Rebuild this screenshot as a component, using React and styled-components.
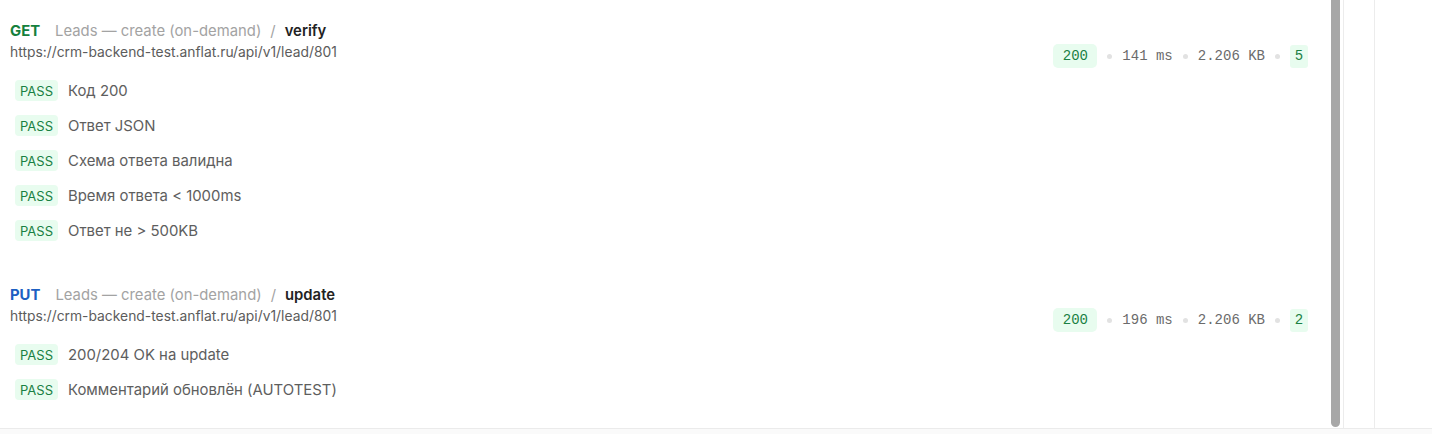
import styled, { createGlobalStyle } from 'styled-components';

const runs = [
  {
    method: 'GET',
    collection: 'Leads — create (on-demand)',
    name: 'verify',
    url: 'https://crm-backend-test.anflat.ru/api/v1/lead/801',
    status: 200,
    time: '141 ms',
    size: '2.206 KB',
    checks: [
      'Код 200',
      'Ответ JSON',
      'Схема ответа валидна',
      'Время ответа < 1000ms',
      'Ответ не > 500KB',
    ],
  },
  {
    method: 'PUT',
    collection: 'Leads — create (on-demand)',
    name: 'update',
    url: 'https://crm-backend-test.anflat.ru/api/v1/lead/801',
    status: 200,
    time: '196 ms',
    size: '2.206 KB',
    checks: ['200/204 OK на update', 'Комментарий обновлён (AUTOTEST)'],
  },
];

const RunEntry = ({ run }) => (
  <Entry>
    <Top>
      <Titles>
        <Heading>
          <Method method={run.method}>{run.method}</Method>
          <Collection>{run.collection}</Collection>
          <Slash>/</Slash>
          <Name>{run.name}</Name>
        </Heading>
        <Url>{run.url}</Url>
      </Titles>
      <Meta>
        <StatusBadge>{run.status}</StatusBadge>
        <Dot />
        <MetaText>{run.time}</MetaText>
        <Dot />
        <MetaText>{run.size}</MetaText>
        <Dot />
        <CountBadge>{run.checks.length}</CountBadge>
      </Meta>
    </Top>
    <Checks>
      {run.checks.map((c) => (
        <Check key={c}>
          <Pass>PASS</Pass>
          <CheckText>{c}</CheckText>
        </Check>
      ))}
    </Checks>
  </Entry>
);

const App = () => (
  <>
    <GlobalStyle />
    <Frame>
      <Main>
        <Panel>
          {runs.map((r) => (
            <RunEntry key={r.method + r.name} run={r} />
          ))}
        </Panel>
        <Track>
          <Thumb />
        </Track>
        <Rail />
        <Rest />
      </Main>
      <Footer />
    </Frame>
  </>
);

export default App;

const GlobalStyle = createGlobalStyle`
  html, body {
    margin: 0;
    padding: 0;
    background: #ffffff;
  }
  body {
    font-family: Inter, 'Noto Sans', sans-serif;
  }
`;

const Frame = styled.div`
  width: 1432px;
  height: 434px;
  display: flex;
  flex-direction: column;
  overflow: hidden;
`;

const Main = styled.div`
  flex: 1;
  display: flex;
  min-height: 0;
`;

const Panel = styled.div`
  width: 1331px;
  box-sizing: border-box;
  padding: 21px 23px 0 10px;
  display: flex;
  flex-direction: column;
  gap: 44px;
  overflow: hidden;
`;

const Track = styled.div`
  width: 12px;
  display: flex;
  justify-content: flex-start;
`;

const Thumb = styled.div`
  width: 9px;
  height: 427px;
  background: #a7a7a7;
  border-radius: 0 0 5px 5px;
`;

const Rail = styled.div`
  width: 30px;
  border-left: 1px solid #ececec;
  border-right: 1px solid #ececec;
`;

const Rest = styled.div`
  flex: 1;
`;

const Footer = styled.div`
  height: 5px;
  border-top: 1px solid #ebebeb;
  background: #fafafa;
`;

const Entry = styled.div`
  display: flex;
  flex-direction: column;
`;

const Top = styled.div`
  display: flex;
  justify-content: space-between;
  align-items: flex-start;
`;

const Titles = styled.div`
  display: flex;
  flex-direction: column;
`;

const Heading = styled.div`
  display: flex;
  align-items: center;
  height: 20px;
  font-size: 14.85px;
`;

const Method = styled.span`
  font-weight: 700;
  color: ${(p) => (p.method === 'GET' ? '#15803d' : '#1d5fc2')};
  margin-right: 15px;
`;

const Collection = styled.span`
  color: #a3a3a3;
`;

const Slash = styled.span`
  color: #a3a3a3;
  margin: 0 9px;
`;

const Name = styled.span`
  font-weight: 600;
  color: #222222;
`;

const Url = styled.div`
  margin-top: 3px;
  font-size: 13.85px;
  line-height: 17px;
  color: #5c5c5c;
`;

const Meta = styled.div`
  display: flex;
  align-items: center;
  gap: 10px;
  margin-top: 23px;
  font-family: 'Liberation Mono', 'DejaVu Sans Mono', monospace;
  font-size: 14px;
`;

const StatusBadge = styled.span`
  display: inline-flex;
  align-items: center;
  justify-content: center;
  width: 44px;
  height: 24px;
  border-radius: 5px;
  background: #e8fcef;
  color: #1a8043;
`;

const CountBadge = styled.span`
  display: inline-flex;
  align-items: center;
  justify-content: center;
  width: 18px;
  height: 23px;
  border-radius: 3px;
  background: #e8fcef;
  color: #1a8043;
`;

const Dot = styled.span`
  width: 5px;
  height: 5px;
  border-radius: 50%;
  background: #e2e2e2;
`;

const MetaText = styled.span`
  color: #6b6b6b;
`;

const Checks = styled.div`
  display: flex;
  flex-direction: column;
  gap: 14px;
  margin-top: 12px;
  padding-left: 5px;
`;

const Check = styled.div`
  display: flex;
  align-items: center;
  gap: 10px;
  height: 21px;
`;

const Pass = styled.span`
  display: inline-flex;
  align-items: center;
  justify-content: center;
  width: 43px;
  height: 21px;
  border-radius: 4px;
  background: #e8fcef;
  color: #1a8043;
  font-size: 13px;
`;

const CheckText = styled.span`
  font-size: 14.9px;
  color: #5e5e5e;
`;
